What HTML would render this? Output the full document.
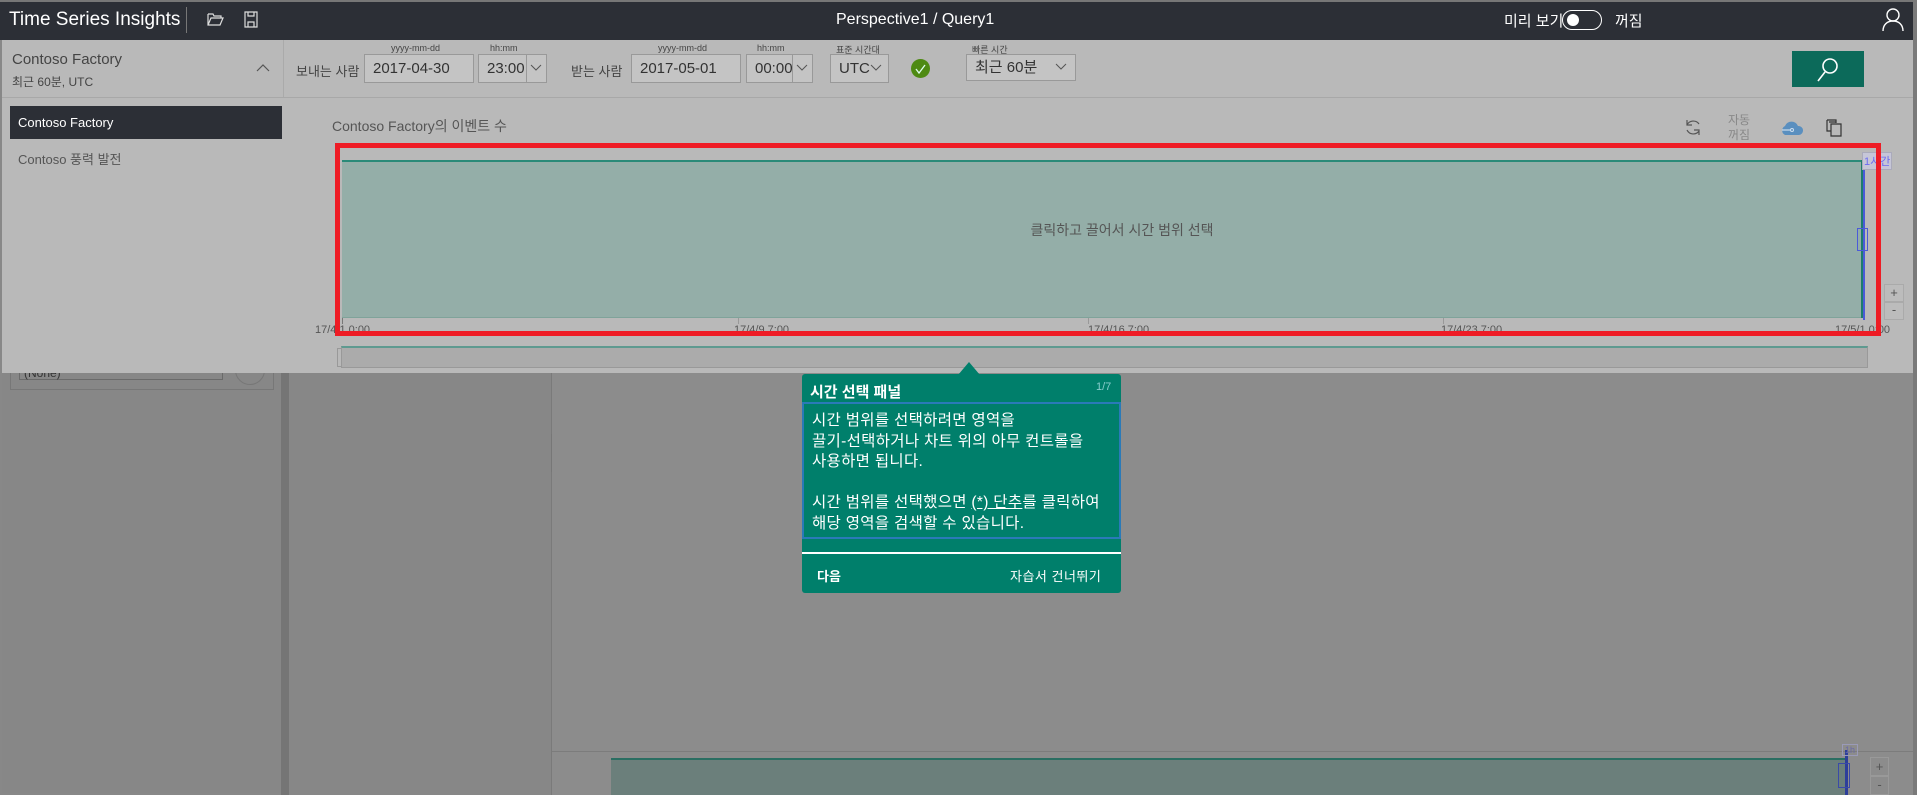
<!DOCTYPE html>
<html><head><meta charset="utf-8"><style>
*{margin:0;padding:0;box-sizing:border-box}
body{width:1917px;height:795px;overflow:hidden;background:#888;font-family:"Liberation Sans","Noto Sans CJK KR",sans-serif;position:relative;color:#333}
.a{position:absolute}
.t{white-space:nowrap}
.box{position:absolute;border:1px solid #999;background:#c4c4c4;font-size:15px;color:#333;padding:0 0 0 8px;line-height:27px}
.lbl{position:absolute;font-size:9px;color:#444;white-space:nowrap}
.ax{position:absolute;font-size:11px;color:#555;top:324px;white-space:nowrap}
</style></head><body>
<div class="a" style="left:0;top:0;width:1917px;height:2px;background:#777"></div>
<div class="a" style="left:2px;top:373px;width:279px;height:420px;background:#878787"></div>
<div class="a" style="left:10px;top:360px;width:264px;height:30px;border:1px solid #777"></div>
<div class="a" style="left:19px;top:356px;width:204px;height:24px;border:1px solid #6a6a6a"></div>
<div class="a t" style="left:24px;top:366px;font-size:12px;color:#333">(None)</div>
<div class="a" style="left:235px;top:355px;width:30px;height:30px;border:1px solid #777;border-radius:50%"></div>
<div class="a" style="left:281px;top:373px;width:8px;height:422px;background:#757575"></div>
<div class="a" style="left:289px;top:373px;width:262px;height:422px;background:#878787"></div>
<div class="a" style="left:551px;top:373px;width:1px;height:422px;background:#7a7a7a"></div>
<div class="a" style="left:551px;top:434px;width:5px;height:38px;border:1px solid #777"></div>
<div class="a" style="left:552px;top:373px;width:1361px;height:422px;background:#8c8c8c"></div>
<div class="a" style="left:552px;top:751px;width:1361px;height:1px;background:#7c7c7c"></div>
<div class="a" style="left:611px;top:758px;width:1235px;height:37px;background:#6b7f7b;border-top:2px solid #2a6e62"></div>
<div class="a" style="left:1845px;top:750px;width:3px;height:45px;background:#2d3f9a"></div>
<div class="a" style="left:1838px;top:763px;width:12px;height:25px;border:1px solid #3a4aa8"></div>
<div class="a t" style="left:1842px;top:744px;font-size:9px;color:#6a6aa8;border:1px solid #9a9ab8;padding:0 2px">1h</div>
<div class="a" style="left:1870px;top:757px;width:19px;height:19px;border:1px solid #999;font-size:13px;text-align:center;line-height:17px;color:#555">+</div>
<div class="a" style="left:1870px;top:776px;width:19px;height:19px;border:1px solid #999;font-size:13px;text-align:center;line-height:15px;color:#555">-</div>
<div class="a" style="left:1913px;top:0;width:4px;height:795px;background:#7a7a7a"></div>

<div class="a" style="left:0;top:2px;width:1913px;height:38px;background:#2c2f36"></div>
<div class="a t" style="left:9px;top:9px;font-size:19px;color:#fff">Time Series Insights</div>
<div class="a" style="left:186px;top:7px;width:1px;height:26px;background:#777"></div>
<svg class="a" style="left:207px;top:12px" width="17" height="15" viewBox="0 0 17 15"><path d="M1 2h5l1 2h7v2M1 2v11h12l3-7H4L1 13" fill="none" stroke="#ddd" stroke-width="1.2"/></svg>
<svg class="a" style="left:244px;top:11px" width="14" height="17" viewBox="0 0 14 17"><path d="M1 1h12v15H1zM4 16v-5h6v5M4 1v4h6V1" fill="none" stroke="#ddd" stroke-width="1.2"/></svg>
<div class="a t" style="left:836px;top:11px;font-size:16px;color:#fff">Perspective1 / Query1</div>
<div class="a t" style="left:1504px;top:10px;font-size:15px;color:#fff">미리 보기</div>
<div class="a" style="left:1562px;top:10px;width:40px;height:20px;border:1.5px solid #fff;border-radius:10px"></div>
<div class="a" style="left:1567px;top:14px;width:12px;height:12px;background:#fff;border-radius:50%"></div>
<div class="a t" style="left:1615px;top:10px;font-size:15px;color:#fff">꺼짐</div>
<svg class="a" style="left:1882px;top:8px" width="22" height="24" viewBox="0 0 22 24"><circle cx="11" cy="7" r="6" fill="none" stroke="#fff" stroke-width="1.4"/><path d="M1 23c0-6 4-10 10-10s10 4 10 10" fill="none" stroke="#fff" stroke-width="1.4"/></svg>

<div class="a" style="left:2px;top:40px;width:1911px;height:333px;background:#b9b9b9"></div>
<div class="a" style="left:2px;top:97px;width:1911px;height:1px;background:#a8a8a8"></div>
<div class="a t" style="left:12px;top:51px;font-size:15px;color:#444">Contoso Factory</div>
<div class="a t" style="left:12px;top:73px;font-size:12px;color:#444">최근 60분, UTC</div>
<svg class="a" style="left:256px;top:63px" width="14" height="9"><path d="M1 8l6-6 6 6" fill="none" stroke="#555" stroke-width="1.2"/></svg>
<div class="a" style="left:283px;top:40px;width:1px;height:57px;background:#aaa"></div>

<div class="a t" style="left:296px;top:61px;font-size:13px;color:#444">보내는 사람</div>
<div class="lbl" style="left:391px;top:43px">yyyy-mm-dd</div>
<div class="box" style="left:364px;top:54px;width:110px;height:29px">2017-04-30</div>
<div class="lbl" style="left:490px;top:43px">hh:mm</div>
<div class="box" style="left:478px;top:54px;width:69px;height:29px">23:00</div>
<div class="a" style="left:526px;top:54px;width:1px;height:29px;background:#999"></div>
<svg class="a" style="left:530px;top:64px" width="12" height="8"><path d="M1 1l5 5 5-5" fill="none" stroke="#555"/></svg>

<div class="a t" style="left:571px;top:61px;font-size:13px;color:#444">받는 사람</div>
<div class="lbl" style="left:658px;top:43px">yyyy-mm-dd</div>
<div class="box" style="left:631px;top:54px;width:110px;height:29px">2017-05-01</div>
<div class="lbl" style="left:757px;top:43px">hh:mm</div>
<div class="box" style="left:746px;top:54px;width:67px;height:29px">00:00</div>
<div class="a" style="left:792px;top:54px;width:1px;height:29px;background:#999"></div>
<svg class="a" style="left:796px;top:64px" width="12" height="8"><path d="M1 1l5 5 5-5" fill="none" stroke="#555"/></svg>

<div class="lbl" style="left:836px;top:43px">표준 시간대</div>
<div class="box" style="left:830px;top:54px;width:59px;height:29px">UTC</div>
<svg class="a" style="left:870px;top:64px" width="12" height="8"><path d="M1 1l5 5 5-5" fill="none" stroke="#555"/></svg>
<div class="a" style="left:911px;top:59px;width:19px;height:19px;border-radius:50%;background:#4e8a12"></div>
<svg class="a" style="left:911px;top:59px" width="19" height="19"><path d="M5 10l3 4 6-8" fill="none" stroke="#dfe" stroke-width="1.3"/></svg>

<div class="lbl" style="left:972px;top:43px">빠른 시간</div>
<div class="box" style="left:966px;top:54px;width:110px;height:27px;line-height:25px">최근 60분</div>
<svg class="a" style="left:1055px;top:63px" width="12" height="8"><path d="M1 1l5 5 5-5" fill="none" stroke="#555"/></svg>

<div class="a" style="left:1792px;top:51px;width:72px;height:36px;background:#0c6a5a"></div>
<svg class="a" style="left:1815px;top:56px" width="26" height="28"><circle cx="15" cy="10" r="7" fill="none" stroke="#fff" stroke-width="1.6"/><path d="M10 16l-7 9" stroke="#fff" stroke-width="1.6"/></svg>

<div class="a" style="left:10px;top:106px;width:272px;height:33px;background:#2c2f36"></div>
<div class="a t" style="left:18px;top:115px;font-size:13px;color:#fff">Contoso Factory</div>
<div class="a t" style="left:18px;top:149px;font-size:13px;color:#555">Contoso 풍력 발전</div>

<div class="a t" style="left:332px;top:116px;font-size:14px;color:#555">Contoso Factory의 이벤트 수</div>
<svg class="a" style="left:1684px;top:118px" width="18" height="18"><path d="M15 6A7 7 0 0 0 3 7M3 12a7 7 0 0 0 12 1M3 2v5h5M15 17v-5h-5" fill="none" stroke="#555" stroke-width="1.2"/></svg>
<div class="a" style="left:1728px;top:113px;font-size:12px;color:#888;line-height:15px;text-align:center">자동<br>꺼짐</div>
<svg class="a" style="left:1780px;top:119px" width="24" height="18"><path d="M5 16a5 5 0 0 1 0-9 7 7 0 0 1 13 0 4 4 0 0 1 1 9z" fill="#5a8fbf"/><path d="M2 11h9" stroke="#cde" stroke-width="1.2"/><circle cx="12" cy="11" r="1.5" fill="none" stroke="#cde"/></svg>
<svg class="a" style="left:1826px;top:119px" width="16" height="18"><path d="M1 1h9v3M1 1v11h4M5 5h10v12H5zM3 3h7" fill="none" stroke="#333" stroke-width="1.2"/></svg>

<div class="a" style="left:342px;top:160px;width:1519px;height:158px;background:#94aea8;border-top:2px solid #2a8a78;border-bottom:1px solid #7fa39a"></div>
<div class="a" style="left:1861px;top:160px;width:2px;height:158px;background:#1f7d6c"></div>
<div class="a" style="left:1863px;top:155px;width:2px;height:165px;background:#4b5ad8"></div>
<div class="a" style="left:1857px;top:228px;width:11px;height:23px;border:1px solid #4b5ad8"></div>
<div class="a t" style="left:1862px;top:152px;font-size:11px;color:#6b6bf0;background:#c6c6d8;border:1px solid #aab;padding:0 1px">1시간</div>
<div class="a t" style="left:1122px;top:220px;font-size:14px;color:#555;transform:translateX(-50%)">클릭하고 끌어서 시간 범위 선택</div>
<div class="a" style="left:342px;top:318px;width:1px;height:6px;background:#777"></div>
<div class="a" style="left:738px;top:318px;width:1px;height:6px;background:#999"></div>
<div class="a" style="left:1088px;top:318px;width:1px;height:6px;background:#999"></div>
<div class="a" style="left:1443px;top:318px;width:1px;height:6px;background:#999"></div>
<div class="ax" style="left:315px">17/4/1 0:00</div>
<div class="ax" style="left:734px">17/4/9 7:00</div>
<div class="ax" style="left:1088px">17/4/16 7:00</div>
<div class="ax" style="left:1441px">17/4/23 7:00</div>
<div class="ax" style="left:1835px">17/5/1 0:00</div>
<div class="a" style="left:1884px;top:284px;width:20px;height:18px;border:1px solid #aaa;background:#bcbcbc;font-size:13px;text-align:center;line-height:16px;color:#555">+</div>
<div class="a" style="left:1884px;top:302px;width:20px;height:18px;border:1px solid #aaa;background:#bcbcbc;font-size:13px;text-align:center;line-height:14px;color:#555">-</div>
<div class="a" style="left:335px;top:143px;width:1546px;height:193px;border:5px solid #ee1c25"></div>
<div class="a" style="left:337px;top:348px;width:5px;height:19px;border:1px solid #999"></div>
<div class="a" style="left:341px;top:346px;width:1527px;height:22px;background:#ababab;border:1px solid #999;border-top:2px solid #5e9a90"></div>

<div class="a" style="left:958px;top:362px;width:0;height:0;border-left:11px solid transparent;border-right:11px solid transparent;border-bottom:13px solid #007f6b"></div>
<div class="a" style="left:802px;top:374px;width:319px;height:219px;background:#007f6b;border-radius:3px"></div>
<div class="a t" style="left:810px;top:381px;font-size:15px;font-weight:bold;color:#fff">시간 선택 패널</div>
<div class="a t" style="left:1096px;top:381px;font-size:11px;color:#8cc">1/7</div>
<div class="a" style="left:802px;top:402px;width:319px;height:137px;border:2px solid #2a7ab8"></div>
<div class="a" style="left:812px;top:411px;font-size:15.5px;color:#fff;line-height:20.5px;white-space:nowrap;letter-spacing:0.3px">시간 범위를 선택하려면 영역을<br>끌기-선택하거나 차트 위의 아무 컨트롤을<br>사용하면 됩니다.<br><br>시간 범위를 선택했으면 <u>(*) 단추</u>를 클릭하여<br>해당 영역을 검색할 수 있습니다.</div>
<div class="a" style="left:802px;top:552px;width:319px;height:2px;background:#fff"></div>
<div class="a t" style="left:817px;top:566px;font-size:13px;font-weight:bold;color:#fff">다음</div>
<div class="a t" style="left:1010px;top:566px;font-size:13px;color:#fff;letter-spacing:0.5px">자습서 건너뛰기</div>
</body></html>
